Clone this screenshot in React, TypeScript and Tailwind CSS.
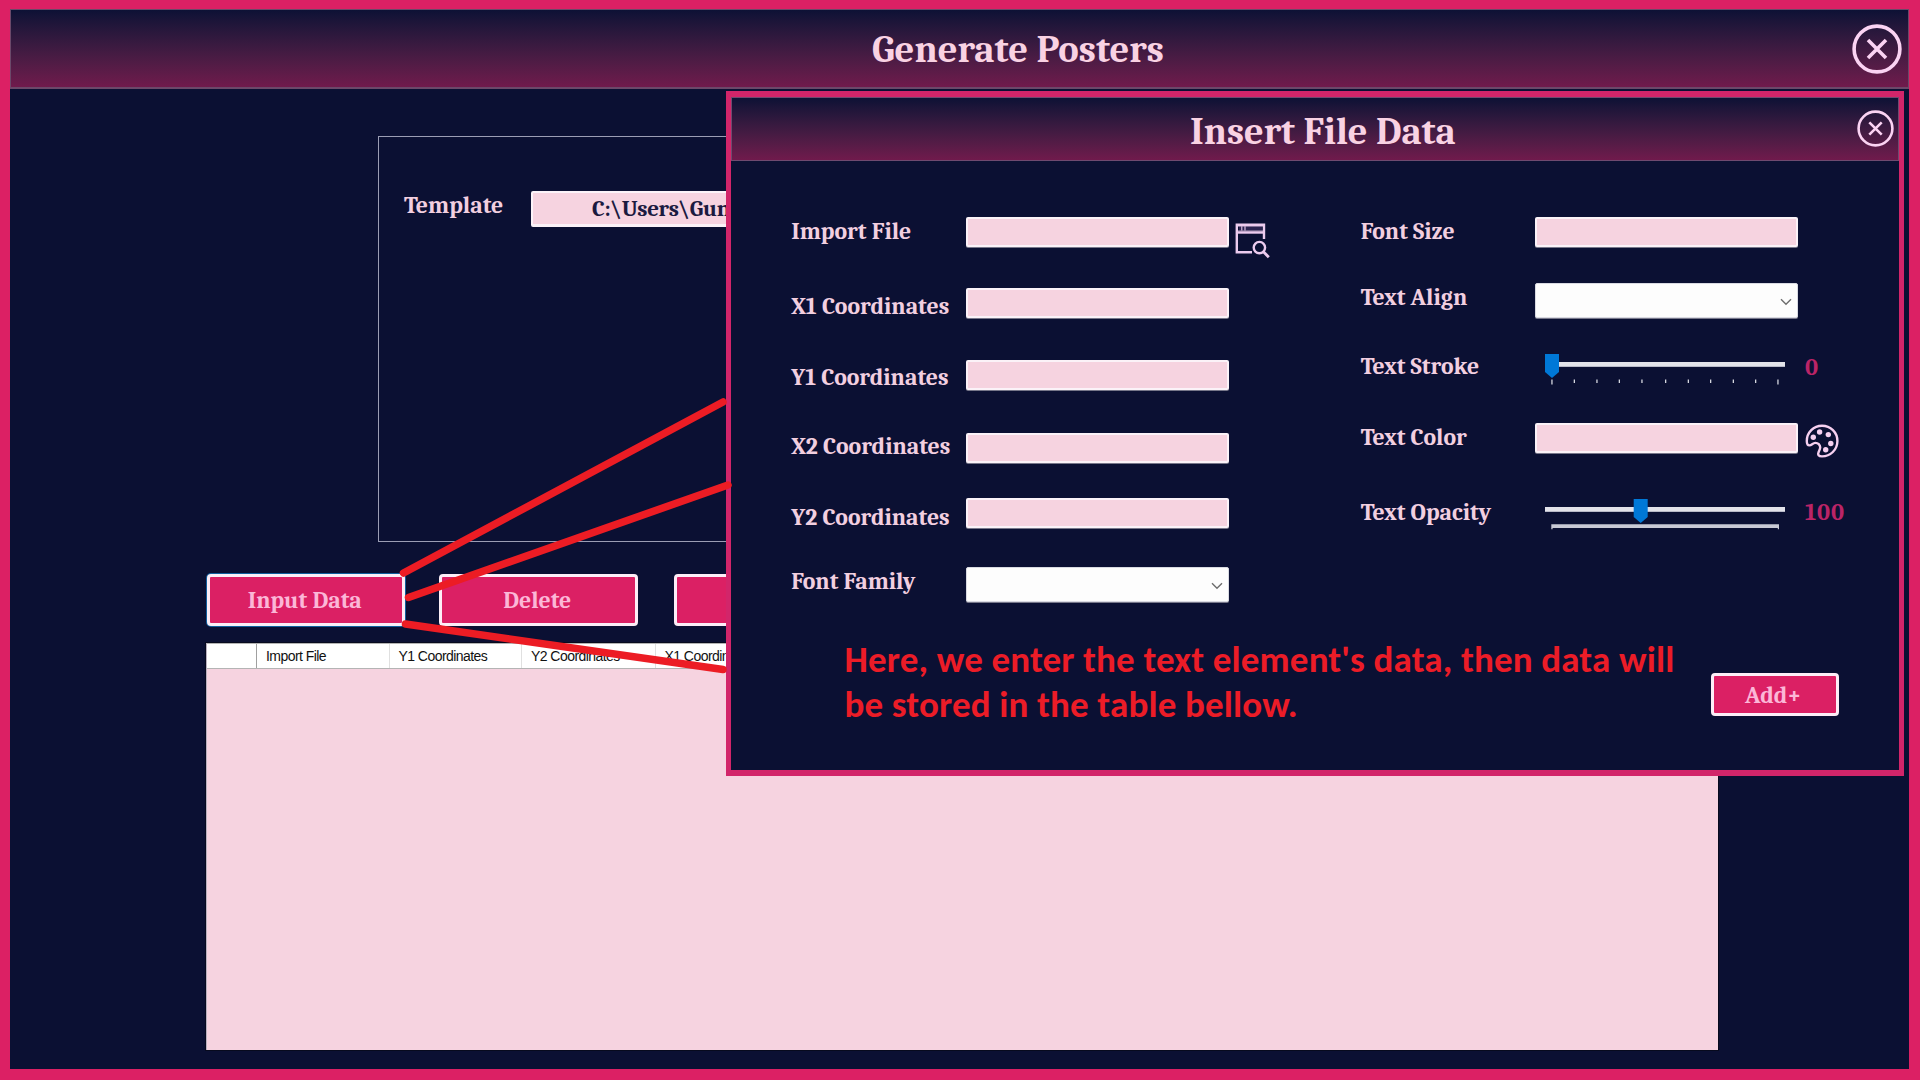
import type { ReactNode } from 'react';

const serif = "font-[Cambria,Caladea,'Noto_Serif',serif] font-bold";

function CloseIcon({ size, stroke, arm }: { size: number; stroke: number; arm: number }) {
  const c = size / 2;
  return (
    <svg width={size} height={size} fill="none" stroke="#fbd3f3" strokeWidth={stroke} className="block shrink-0">
      <circle cx={c} cy={c} r={c - stroke / 2 - 0.3} />
      <path d={`M${c - arm} ${c - arm}L${c + arm} ${c + arm}M${c + arm} ${c - arm}L${c - arm} ${c + arm}`} />
    </svg>
  );
}

function BrowseIcon() {
  return (
    <svg width="36" height="36" viewBox="0 0 36 36" fill="none" stroke="#eccbee" className="mt-[6px] ml-[6px] block shrink-0">
      <path d="M17 29.3H1.8V1.8H29V16" strokeWidth="2.4" />
      <path d="M2 9.5H29" strokeWidth="2.4" />
      <path d="M4 3.2H27V7.6H4Z" fill="#2b2350" stroke="none" />
      <path d="M6.8 3.2V7.6M10 3.2V7.6" strokeWidth="1.1" />
      <path d="M3 3.1H28M3 8H28" strokeWidth="0.8" />
      <circle cx="24.4" cy="24.6" r="5.7" strokeWidth="2.4" />
      <path d="M28.4 28.8L33.8 34.2" strokeWidth="2.8" />
    </svg>
  );
}

function PaletteIcon() {
  return (
    <svg width="34" height="34" viewBox="-17 -17 34 34" className="mt-[1px] ml-[7px] block shrink-0">
      <path
        d="M-15.2 0C-15.2 -8.6 -8.4 -15.3 0 -15.3C8.6 -15.3 15.4 -8.6 15.4 0C15.4 8.8 8.4 15.4 0 15.4C-3.4 15.4 -4.6 13.6 -3.4 11C-2.4 9 -1.8 8 -1.8 6.6C-1.8 3.8 -4 1.9 -6.6 1.9C-9.4 1.9 -10.2 4.4 -12.6 4.4C-14.6 4.4 -15.2 2.4 -15.2 0Z"
        fill="none"
        stroke="#f6d0f0"
        strokeWidth="2.4"
      />
      <g fill="#f6d0f0">
        <circle cx="-8.7" cy="-3.8" r="2.7" />
        <circle cx="-2.4" cy="-9" r="2.7" />
        <circle cx="6.3" cy="-6.4" r="2.7" />
        <circle cx="8.8" cy="2.5" r="2.7" />
        <circle cx="3.7" cy="8.7" r="2.7" />
      </g>
    </svg>
  );
}

function Row({ label, height, labelTop, children }: { label: string; height: string; labelTop: string; children: ReactNode }) {
  return (
    <div className={`flex items-start ${height}`}>
      <div className={`w-[175px] shrink-0 pl-[0.7px] whitespace-nowrap text-[23.75px] leading-7 text-[#f2cfe0] ${serif} ${labelTop}`}>{label}</div>
      {children}
    </div>
  );
}

function TextBox() {
  return <div className="h-[29.5px] w-[263px] shrink-0 rounded-[2px] border-2 border-[#fbf2f8] bg-[#f6d3e0] shadow-[0_1px_0_#77778a]" />;
}

function SelectBox() {
  return (
    <div className="flex h-[34.5px] w-[263px] shrink-0 items-center justify-end rounded-[2px] border border-[#d9dae2] bg-[#fdfdfd] pr-[5px] shadow-[0_1px_0_#77778a]">
      <svg width="12" height="8" viewBox="0 0 12 8" fill="none" stroke="#6e6e6e" strokeWidth="1.4" className="mt-[3px]">
        <path d="M1 1.2L6 6.2L11 1.2" />
      </svg>
    </div>
  );
}

function Slider({ thumb, ticks }: { thumb: number; ticks: number[] | null }) {
  return (
    <svg width="262" height="36" fill="none" className="shrink-0">
      <rect x="10" y="8" width="240" height="5" fill="#e3e3ea" />
      <rect x="10" y="12" width="240" height="1" fill="#b9bac8" />
      <path d={`M${thumb - 7} 0H${thumb + 7}V18L${thumb} 24L${thumb - 7} 18Z`} fill="#0078d7" />
      {ticks ? (
        ticks.map((x, i) => <rect key={x} x={x} y="25.5" width="1.3" height={i === 0 || i === 10 ? 5 : 3.5} fill="#d5d6df" />)
      ) : (
        <path d="M16.3 25.3H244V30.3H242.8V29H17.6V30.3H16.3Z" fill="#c8c9d5" />
      )}
    </svg>
  );
}

const columns = [
  { name: 'Import File', width: 'w-[132.5px]' },
  { name: 'Y1 Coordinates', width: 'w-[132.5px]' },
  { name: 'Y2 Coordinates', width: 'w-[133.5px]' },
  { name: 'X1 Coordinates', width: 'w-[133px]' },
];

function MainButton({ label, className }: { label: string; className: string }) {
  return (
    <div
      className={`flex h-[52px] shrink-0 items-center justify-center rounded-[4px] border-[3px] border-[#fdeef7] bg-[#db2064] text-[23.75px] text-[#fbb7d7] ${serif} ${className}`}
    >
      <span className="mt-[2px] mr-[2px]">{label}</span>
    </div>
  );
}

function InsertDialog() {
  return (
    <section className="absolute top-[82px] left-[716px] flex h-[685px] w-[1178px] flex-col border-x-[5px] border-y-[6px] border-[#d2256a] bg-[#0b1033]">
      <header className="flex h-16 shrink-0 justify-between border border-[#6f4a70] bg-linear-to-b from-[#0d1135] to-[#701a4c] pr-[4px] pl-[458px]">
        <h2 className={`mt-[11px] text-[38.4px] leading-[46px] whitespace-nowrap text-[#f9d2e3] ${serif}`}>Insert File Data</h2>
        <div className="mt-[12px]">
          <CloseIcon size={37} stroke={2.6} arm={6.2} />
        </div>
      </header>
      <div className="flex pt-[56px] pl-[59.5px]">
        <div className="w-[569.5px] shrink-0">
          <Row label="Import File" height="h-[71px]" labelTop="mt-[1px]">
            <TextBox />
            <BrowseIcon />
          </Row>
          <Row label="X1 Coordinates" height="h-[72px]" labelTop="mt-[5px]"><TextBox /></Row>
          <Row label="Y1 Coordinates" height="h-[73px]" labelTop="mt-[4px]"><TextBox /></Row>
          <Row label="X2 Coordinates" height="h-[65px]" labelTop="mt-0"><TextBox /></Row>
          <Row label="Y2 Coordinates" height="h-[69px]" labelTop="mt-[6px]"><TextBox /></Row>
          <Row label="Font Family" height="h-[68px]" labelTop="mt-[1px]"><SelectBox /></Row>
        </div>
        <div>
          <Row label="Font Size" height="h-[66px]" labelTop="mt-[1px]"><TextBox /></Row>
          <Row label="Text Align" height="h-[71px]" labelTop="mt-[1px]"><SelectBox /></Row>
          <Row label="Text Stroke" height="h-[69px]" labelTop="-mt-[1px]">
            <Slider thumb={17} ticks={[16.3, 38.7, 61.3, 83.7, 106.3, 130, 152.7, 175, 197.7, 220, 242.3]} />
            <span className={`-mt-[1px] ml-[8px] text-[24.5px] leading-7 text-[#bb2467] ${serif}`}>0</span>
          </Row>
          <Row label="Text Color" height="h-[76px]" labelTop="mt-[1px]">
            <TextBox />
            <PaletteIcon />
          </Row>
          <Row label="Text Opacity" height="h-[50px]" labelTop="mt-0">
            <Slider thumb={105.7} ticks={null} />
            <span className={`-mt-[1px] ml-[8px] text-[24.5px] leading-7 tracking-[0.8px] text-[#bb2467] ${serif}`}>100</span>
          </Row>
        </div>
      </div>
      <footer className="flex items-start pl-[113.5px]">
        <p className="mt-[2px] w-[866px] text-[37px] leading-[45px] font-bold tracking-[0.16px] whitespace-nowrap text-[#ec1c27] font-[Calibri,Carlito,Lato,sans-serif]">
          Here, we enter the text element&apos;s data, then data will
          <br />
          be stored in the table bellow.
        </p>
        <div className={`mt-[38px] flex h-[43px] w-[128.5px] items-center justify-center rounded-[4px] border-[3px] border-[#fdeef7] bg-[#db2064] text-[23.75px] text-[#fbb7d7] ${serif}`}>
          <span className="mt-[2px] mr-[3px]">Add+</span>
        </div>
      </footer>
    </section>
  );
}

export default function App() {
  return (
    <div className="relative flex h-[1080px] w-[1920px] flex-col overflow-hidden border-t-[9px] border-r-[11px] border-b-[11px] border-l-[10px] border-[#dc2064] bg-[#0b1033]">
      <header className="flex h-[80px] shrink-0 justify-between border border-b-2 border-[#6b4869] bg-linear-to-b from-[#0d1135] to-[#701a4c] pr-[6px] pl-[861px]">
        <h1 className={`mt-[17px] text-[38.6px] leading-[46px] whitespace-nowrap text-[#f9d2e3] ${serif}`}>Generate Posters</h1>
        <div className="mt-[13.5px]">
          <CloseIcon size={50} stroke={3.6} arm={9} />
        </div>
      </header>

      <div className="mt-[47px] ml-[367.5px] flex h-[406px] w-[1000px] shrink-0 items-start border border-[#9b9db4] pt-[54px] pl-[25.5px]">
        <span className={`mt-[1px] w-[127px] text-[23.75px] leading-7 text-[#f2cfe0] ${serif}`}>Template</span>
        <div className={`h-[36px] w-[400px] rounded-[2px] border-2 border-b-[3px] border-[#fbf2f8] bg-[#f6d3e0] pl-[59px] text-[23px] leading-[31px] tracking-[-0.35px] text-[#1b1a40] ${serif}`}>
          C:\Users\Gun
        </div>
      </div>

      <div className="mt-[32px] ml-[196.5px] flex shrink-0">
        <MainButton label="Input Data" className="w-[198.5px] shadow-[0_0_0_1px_#0f5f9e]" />
        <MainButton label="Delete" className="ml-[33.5px] w-[199.5px]" />
        <MainButton label="" className="ml-[36px] w-[200px]" />
      </div>

      <div className="mt-[17px] ml-[196px] h-[407px] w-[1511.5px] shrink-0 border-l border-[#b9b0c0] bg-[#f6d3e0] shadow-[0_0_0_1px_#070a1e]">
        <div className="flex h-[26px] items-stretch border-y border-[#b4b4b4] bg-white font-['Liberation_Sans',Arial,sans-serif] text-[14px] tracking-[-0.55px] text-[#111]">
          <div className="w-[50px] shrink-0 border-r border-[#a0a0a0]" />
          {columns.map((c) => (
            <div key={c.name} className={`shrink-0 border-r border-[#e0e0e0] pl-[9px] leading-[25px] whitespace-nowrap ${c.width}`}>
              {c.name}
            </div>
          ))}
        </div>
      </div>

      <InsertDialog />

      {/* callout lines from the Input Data button to the dialog */}
      <svg className="pointer-events-none absolute top-0 left-0" width="760" height="700" viewBox="10 9 760 700" fill="none" stroke="#ec1c24" strokeWidth="7.5" strokeLinecap="round">
        <path d="M403.5 573L723 402" />
        <path d="M408.5 597.5L728 485" />
        <path d="M405.5 624L723 669.5" />
      </svg>
    </div>
  );
}
